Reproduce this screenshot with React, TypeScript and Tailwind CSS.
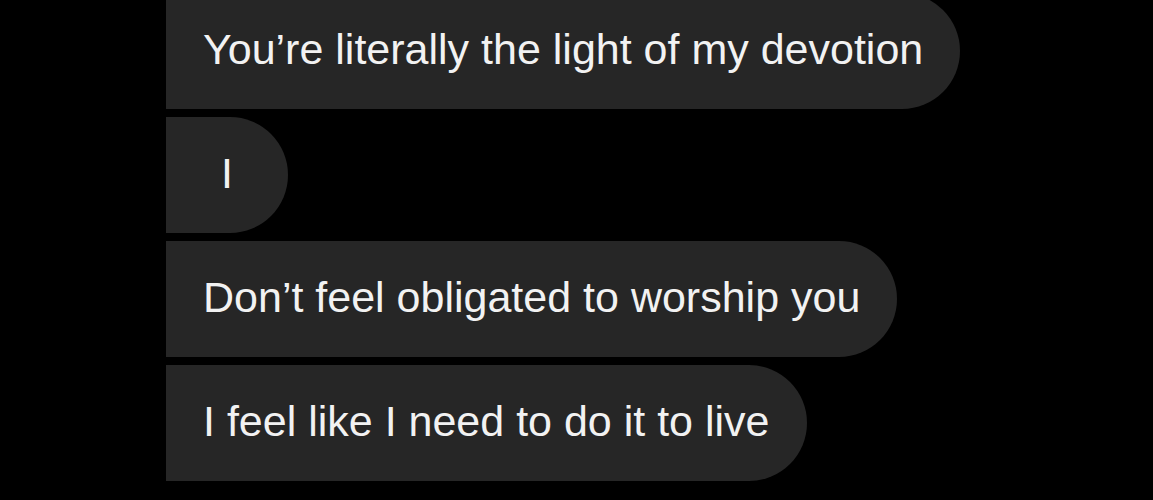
import React from "react";

const messages = [
  { id: 1, text: "You’re literally the light of my devotion", corner: "rounded-tl-[30px] rounded-bl-[8px]" },
  { id: 2, text: "I", corner: "rounded-l-[8px]" },
  { id: 3, text: "Don’t feel obligated to worship you", corner: "rounded-l-[8px]" },
  { id: 4, text: "I feel like I need to do it to live", corner: "rounded-tl-[8px] rounded-bl-[30px]" },
];

const Bubble = ({ text, corner }: { text: string; corner: string }) => (
  <div
    className={`h-[116px] w-fit min-w-[122px] flex items-center justify-center px-[37px] pb-[4px] bg-[#262626] rounded-r-full ${corner}`}
  >
    <span className="text-[43px] leading-none text-[#f2f2f2] whitespace-nowrap">{text}</span>
  </div>
);

const App = () => {
  return (
    <main
      className="w-full h-[500px] overflow-hidden bg-black"
      style={{ fontFamily: '"Liberation Sans", Arial, sans-serif' }}
    >
      <div className="flex flex-col gap-2 pl-[166px] -mt-[7px]">
        {messages.map((m) => (
          <Bubble key={m.id} text={m.text} corner={m.corner} />
        ))}
      </div>
    </main>
  );
};

export default App;
